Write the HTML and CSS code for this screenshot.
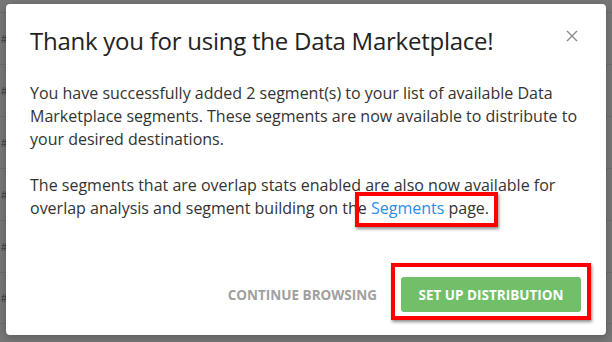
FILE: index.html
```html
<!DOCTYPE html>
<html>
<head>
<meta charset="utf-8">
<link rel="stylesheet" href="styles.css">
</head>
<body>
<div class="backdrop">
  <div class="bg-rows">
    <div class="bg-row"><span class="hash">#</span></div>
    <div class="bg-row"><span class="hash">#</span></div>
    <div class="bg-row"><span class="hash">#</span></div>
    <div class="bg-row"><span class="hash">#</span></div>
    <div class="bg-row"><span class="hash">#</span></div>
    <div class="bg-row"><span class="hash">#</span></div>
  </div>
  <div class="modal">
    <div class="header">
      <h1 class="title">Thank you for using the Data Marketplace!</h1>
      <button class="close" aria-label="Close">
        <svg width="12" height="12" viewBox="0 0 12 12"><path d="M1 1L11 11M11 1L1 11" stroke="#8a8a8a" stroke-width="1.4" fill="none"/></svg>
      </button>
    </div>
    <div class="body">
      <p>You have successfully added 2 segment(s) to your list of available Data Marketplace segments. These segments are now available to distribute to your desired destinations.</p>
      <p>The segments that are overlap stats enabled are also now available for overlap analysis and segment building on the <a class="link" href="#">Segments</a> page.</p>
    </div>
    <div class="footer">
      <button class="btn-text">CONTINUE BROWSING</button>
      <button class="btn-green">SET UP DISTRIBUTION</button>
    </div>
    <div class="hl hl-link"></div>
    <div class="hl hl-btn"></div>
  </div>
</div>
</body>
</html>
```
FILE: styles.css
```css
* { box-sizing: border-box; }
html, body { margin: 0; padding: 0; }
body {
  width: 612px;
  height: 342px;
  overflow: hidden;
  font-family: "Open Sans", "Liberation Sans", sans-serif;
  background: #777777;
}
.backdrop {
  position: relative;
  width: 612px;
  height: 342px;
  overflow: hidden;
  background: #777777;
}
.bg-rows {
  position: absolute;
  left: 0;
  top: 12px;
  width: 612px;
  display: flex;
  flex-direction: column;
}
.bg-row {
  height: 52px;
  border-top: 1px solid #6c6c6c;
  display: flex;
  align-items: center;
  padding-left: 1px;
}
.bg-row:last-child { border-bottom: 1px solid #6c6c6c; }
.hash {
  font-size: 11px;
  color: #333;
  font-family: "Liberation Sans", sans-serif;
}
.modal {
  position: absolute;
  left: 6px;
  top: 4px;
  width: 600px;
  height: 331px;
  background: #fff;
  border-radius: 4px;
  box-shadow: 0 2px 8px rgba(0,0,0,0.25);
  padding: 22px 24px 0 24px;
  display: flex;
  flex-direction: column;
}
.header {
  display: flex;
  justify-content: space-between;
  align-items: flex-start;
}
.title {
  margin: 0;
  font-family: "Open Sans", sans-serif;
  font-weight: 400;
  font-size: 24px;
  letter-spacing: -0.25px;
  color: #222;
  line-height: 30px;
}
.close {
  border: 0;
  background: none;
  padding: 0;
  margin-top: 4px;
  margin-right: 4px;
  cursor: pointer;
  display: flex;
}
.body {
  margin-top: 26px;
  font-size: 16px;
  line-height: 23px;
  color: #333;
}
.body p { margin: 0 0 23px 0; }
.link { color: #2a8de8; text-decoration: none; }
.footer {
  margin-top: auto;
  margin-bottom: 23px;
  display: flex;
  justify-content: flex-end;
  align-items: center;
  gap: 24px;
  padding-right: 1px;
}
.btn-text {
  border: 0;
  background: none;
  font-family: "Open Sans", sans-serif;
  font-weight: 700;
  font-size: 13.5px;
  color: #a0a0a0;
  padding: 0;
}
.btn-green {
  border: 0;
  background: #72bf6a;
  color: #fff;
  font-family: "Open Sans", sans-serif;
  font-weight: 700;
  font-size: 13.5px;
  width: 180px;
  height: 35px;
  border-radius: 3px;
}
.hl {
  position: absolute;
  border: 4px solid #ff0000;
  box-shadow: 1px 2px 3px rgba(0,0,0,0.45);
}
.hl-link { left: 349px; top: 188px; width: 143px; height: 35px; }
.hl-btn { left: 385px; top: 259px; width: 200px; height: 57px; }
```
